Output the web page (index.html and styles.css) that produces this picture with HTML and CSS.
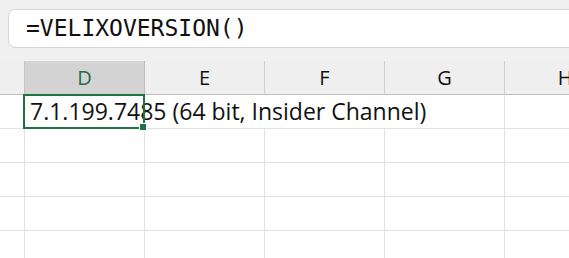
FILE: index.html
```html
<!DOCTYPE html>
<html>
<head>
<title>Sheet</title>
<link rel="stylesheet" href="styles.css">
</head>
<body>
<div class="formula_bar">
	<div class="formula_box">=VELIXOVERSION()</div>
</div>
<div class="sheet">
	<div class="hd corner"></div>
	<div class="hd active">D</div>
	<div class="hd">E</div>
	<div class="hd">F</div>
	<div class="hd">G</div>
	<div class="hd last">H</div>

	<div class="cell rowhead"></div>
	<div class="cell value">7.1.199.7485 (64 bit, Insider Channel)
		<span class="selection"><span class="handle"></span></span>
	</div>
	<div class="cell last"></div>

	<div class="cell rowhead"></div><div class="cell"></div><div class="cell"></div><div class="cell"></div><div class="cell"></div><div class="cell last"></div>
	<div class="cell rowhead"></div><div class="cell"></div><div class="cell"></div><div class="cell"></div><div class="cell"></div><div class="cell last"></div>
	<div class="cell rowhead"></div><div class="cell"></div><div class="cell"></div><div class="cell"></div><div class="cell"></div><div class="cell last"></div>
	<div class="cell rowhead"></div><div class="cell"></div><div class="cell"></div><div class="cell"></div><div class="cell"></div><div class="cell last"></div>
</div>
</body>
</html>
```
FILE: styles.css
```css
body{
	margin:0;
	background:#fff;
	font-family:"Open Sans", "Noto Sans", sans-serif;
	overflow:hidden;
}
.formula_bar{
	height:61px;
	background:#f0f0f0;
	padding:9px 0 0 8px;
	box-sizing:border-box;
}
.formula_box{
	height:39px;
	margin-right:-20px;/*runs off the right edge*/
	background:#fff;
	border:1px solid #d6d6d6;
	border-radius:7px;
	box-sizing:border-box;
	padding-left:17px;
	font-family:"DejaVu Sans Mono", "Liberation Mono", monospace;
	font-size:23px;
	line-height:37px;
	color:#111;
}
.sheet{
	display:grid;
	grid-template-columns:25px 120px 120px 120px 120px 120px;
	grid-auto-rows:34px;
}
.hd{
	background:#efefef;
	border-right:1px solid #cfcfcf;
	border-bottom:1px solid #bdbdbd;
	font-size:20px;
	line-height:33px;
	text-align:center;
	color:#111;
}
.hd.active{
	background:#d3d3d3;
	color:#1f6e43;
	border-right-color:#bdbdbd;
}
.hd.corner{
	border-right-color:#c6c6c6;
}
.hd.last, .cell.last{
	border-right:none;
}
.cell{
	border-right:1px solid #e1e1e1;
	border-bottom:1px solid #e1e1e1;
	box-sizing:border-box;
}
.value{
	grid-column:span 4;
	position:relative;
	padding-left:5px;
	font-size:23px;
	line-height:33px;
	white-space:nowrap;
	color:#111;
}
.selection{
	position:absolute;
	left:-2px;
	top:-1px;
	width:122px;
	height:35px;
	border:2px solid #1f7244;
	box-sizing:border-box;
}
.handle{
	position:absolute;
	right:-4px;
	bottom:-4px;
	width:6px;
	height:6px;
	background:#1f7244;
	border:1px solid #fff;
}
```
